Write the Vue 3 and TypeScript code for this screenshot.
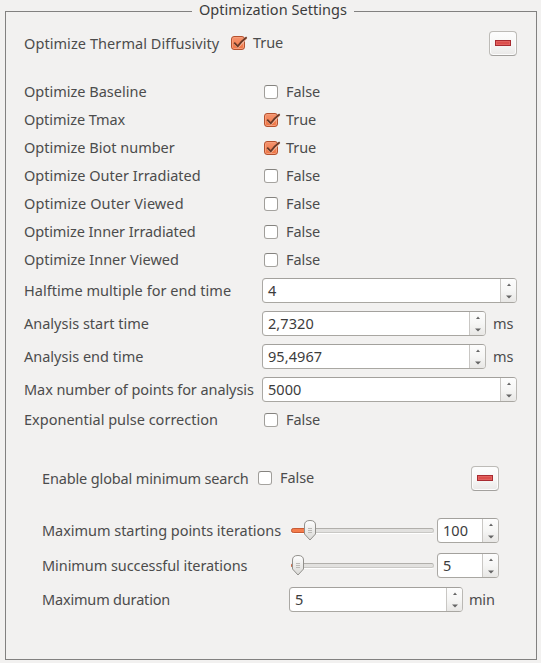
<script setup lang="ts">
import { ref } from 'vue'

interface Row {
  label: string
  kind: 'check' | 'spin'
  tracking?: number
  checked?: boolean
  value?: string
  unit?: string
}

const thermal = ref(true)
const globalSearch = ref(false)

const rows = ref<Row[]>([
  { label: 'Optimize Baseline', kind: 'check', checked: false },
  { label: 'Optimize Tmax', kind: 'check', checked: true, tracking: -0.06 },
  { label: 'Optimize Biot number', kind: 'check', checked: true },
  { label: 'Optimize Outer Irradiated', kind: 'check', checked: false },
  { label: 'Optimize Outer Viewed', kind: 'check', checked: false, tracking: 0.1 },
  { label: 'Optimize Inner Irradiated', kind: 'check', checked: false, tracking: -0.09 },
  { label: 'Optimize Inner Viewed', kind: 'check', checked: false },
  { label: 'Halftime multiple for end time', kind: 'spin', value: '4', tracking: 0.04 },
  { label: 'Analysis start time', kind: 'spin', value: '2,7320', unit: 'ms' },
  { label: 'Analysis end time', kind: 'spin', value: '95,4967', unit: 'ms' },
  { label: 'Max number of points for analysis', kind: 'spin', value: '5000', tracking: -0.08 },
  { label: 'Exponential pulse correction', kind: 'check', checked: false },
])

const sliders = ref([
  { label: 'Maximum starting points iterations', value: '100', offset: 13, tracking: -0.04 },
  { label: 'Minimum successful iterations', value: '5', offset: 1, tracking: -0.07 },
])
</script>

<template>
  <main class="page">
    <section class="frame">
      <h1 class="title"><span>Optimization Settings</span></h1>

      <header class="head main-head">
        <span class="label">Optimize Thermal Diffusivity</span>
        <button class="check" :class="{ on: thermal }" @click="thermal = !thermal">
          <svg v-if="thermal" viewBox="0 0 17 15"><path class="glow" d="M3.5 7.8 7 11.5 15.5 2.5" /><path class="tick" d="M3.2 6.7 6.8 10.3Q10 5.5 15.7 1.3" /></svg>
        </button>
        <span class="state">{{ thermal ? 'True' : 'False' }}</span>
        <button class="collapse"><i></i></button>
      </header>

      <div class="rows">
        <div v-for="row in rows" :key="row.label" class="row" :class="row.kind + '-row'">
          <span class="label" :style="{ letterSpacing: (row.tracking ?? 0) + 'px' }">{{ row.label }}</span>
          <template v-if="row.kind === 'check'">
            <button class="check" :class="{ on: row.checked }" @click="row.checked = !row.checked">
              <svg v-if="row.checked" viewBox="0 0 17 15"><path class="glow" d="M3.5 7.8 7 11.5 15.5 2.5" /><path class="tick" d="M3.2 6.7 6.8 10.3Q10 5.5 15.7 1.3" /></svg>
            </button>
            <span class="state">{{ row.checked ? 'True' : 'False' }}</span>
          </template>
          <template v-else>
            <div class="spin">
              <span class="value">{{ row.value }}</span>
              <span class="steps">
                <svg viewBox="0 0 16 23"><path d="M6 7 8 4.5l2 2.5Z" /><path d="M5 16.5h6l-3 3Z" /></svg>
              </span>
            </div>
            <span v-if="row.unit" class="unit">{{ row.unit }}</span>
          </template>
        </div>
      </div>

      <section class="sub">
        <header class="head">
          <span class="label">Enable global minimum search</span>
          <button class="check" :class="{ on: globalSearch }" @click="globalSearch = !globalSearch"></button>
          <span class="state">{{ globalSearch ? 'True' : 'False' }}</span>
          <button class="collapse"><i></i></button>
        </header>
        <div class="sub-rows">
          <div v-for="s in sliders" :key="s.label" class="row slider-row">
            <span class="label" :style="{ letterSpacing: s.tracking + 'px' }">{{ s.label }}</span>
            <div class="slider">
              <div class="track"><div class="fill" :style="{ width: s.offset + 3 + 'px' }"></div></div>
              <svg class="thumb" :style="{ left: s.offset + 'px' }" viewBox="0 0 12 21">
                <defs>
                  <linearGradient id="thumb-fill" x1="0" y1="0" x2="0" y2="1">
                    <stop offset="0" stop-color="#fff" /><stop offset="1" stop-color="#d9d8d5" />
                  </linearGradient>
                </defs>
                <path class="body" d="M.5 5Q.5.5 6 .5T11.5 5V14L6 20 .5 14Z" />
                <path class="grip" d="M4 8.5h4M4 10.5h4M4 12.5h4" />
              </svg>
            </div>
            <div class="spin small">
              <span class="value">{{ s.value }}</span>
              <span class="steps">
                <svg viewBox="0 0 16 23"><path d="M6 7 8 4.5l2 2.5Z" /><path d="M5 16.5h6l-3 3Z" /></svg>
              </span>
            </div>
          </div>
          <div class="row spin-row duration">
            <span class="label">Maximum duration</span>
            <div class="spin">
              <span class="value">5</span>
              <span class="steps">
                <svg viewBox="0 0 16 23"><path d="M6 7 8 4.5l2 2.5Z" /><path d="M5 16.5h6l-3 3Z" /></svg>
              </span>
            </div>
            <span class="unit">min</span>
          </div>
        </div>
      </section>
    </section>
  </main>
</template>

<style>
body {
  background: #f2f1f0;
}
</style>

<style scoped>
* {
  box-sizing: border-box;
}
.page {
  height: 663px;
  padding: 11px 4px 3px 5px;
  background: #f2f1f0;
  color: #4c4c4c;
  font: 14.5px/20px "Noto Sans", sans-serif;
  white-space: nowrap;
}
.frame {
  height: 649px;
  border: 1px solid #828180;
  padding: 0 19px 0 18px;
}
.title {
  display: flex;
  justify-content: center;
  height: 19px;
  margin: 0;
  font: inherit;
  color: #3c3c3c;
}
.title span {
  height: 20px;
  margin: -13px 0 0 5px;
  padding: 0 7px;
  background: #f2f1f0;
  letter-spacing: 0.05px;
}
.head {
  display: flex;
  align-items: center;
  height: 25px;
}
.head .label {
  width: 207px;
  padding-bottom: 2px;
}
.main-head .label {
  letter-spacing: 0.07px;
}
.head .check {
  margin-bottom: 1px;
}
.head .state {
  padding-bottom: 3px;
}
.rows {
  margin-top: 22px;
}
.row {
  display: flex;
  align-items: center;
}
.check-row {
  height: 28px;
}
.spin-row {
  height: 33px;
}
.slider-row {
  height: 35px;
}
.row .label {
  flex: none;
  width: 238px;
  padding-bottom: 2px;
}
.check-row .check {
  margin-left: 2px;
}
.check {
  flex: none;
  width: 14px;
  height: 14px;
  padding: 0;
  border: 1px solid #8f8d89;
  border-color: #85837f #a09e9a #a5a39f;
  border-radius: 3px;
  background: #fff;
}
.check.on {
  border-color: #b5512e;
  background: linear-gradient(#f5946f, #ef7442);
  box-shadow: inset 0 0 0 1px #f69e7a;
}
.check svg {
  display: block;
  width: 17px;
  height: 15px;
  margin: -1px 0 0 -1px;
}
.check path {
  fill: none;
}
.glow {
  stroke: #fbc3aa;
  stroke-width: 1.2;
}
.check .tick {
  stroke: #6b3a27;
  stroke-width: 1.9;
}
.state {
  margin-left: 8px;
  padding-bottom: 2px;
  letter-spacing: -0.08px;
}
.collapse {
  display: flex;
  align-items: center;
  justify-content: center;
  width: 28px;
  height: 25px;
  margin-left: auto;
  padding: 0 0 1px;
  border: 1px solid #bdbbb7;
  border-bottom-color: #a3a19e;
  border-radius: 4px;
  background: linear-gradient(#fdfdfd, #f5f5f4 60%, #e9e8e7);
  box-shadow: inset 0 0 0 1px #fcfcfc;
}
.collapse i {
  width: 16px;
  height: 6px;
  border: 1px solid #a82b31;
  background: #dc4f4d;
  box-shadow: inset 0 0 0 1px #e2625f;
}
.spin {
  display: flex;
  flex: 1;
  height: 25px;
  border: 1px solid #b0aeaa;
  border-color: #a3a19d #bab8b4 #a9a7a2 #aaa8a4;
  border-radius: 4px;
  background: #fff;
  overflow: hidden;
}
.value {
  flex: 1;
  padding-left: 5px;
  line-height: 22px;
  letter-spacing: 0.08px;
  color: #3c3c3c;
}
.steps {
  width: 16px;
  border-left: 1px solid #c9c7c4;
  background: linear-gradient(#fdfdfd, #f6f6f5 50%, #e8e7e5);
}
.steps svg {
  display: block;
  width: 16px;
  height: 23px;
}
.steps path {
  fill: #656565;
}
.unit {
  width: 31px;
  padding: 0 0 2px 7px;
}
.sub {
  margin-top: 32px;
  padding: 0 18px;
}
.sub .head .label {
  width: 216px;
  letter-spacing: -0.14px;
}
.sub-rows {
  margin-top: 22px;
}
.slider-row .label,
.duration .label {
  width: 247px;
}
.duration .label {
  letter-spacing: -0.18px;
}
.slider {
  position: relative;
  width: 148px;
  height: 21px;
  padding: 8px 3px 0 2px;
}
.track {
  height: 5px;
  border: 1px solid #c9c8c5;
  border-top-color: #b1afab;
  border-radius: 3px;
  background: #e2e1df;
  box-shadow: 0 1px 0 #fff;
}
.fill {
  height: 5px;
  margin: -1px 0 0 -1px;
  border: 1px solid #c95b35;
  border-radius: 3px 0 0 3px;
  background: #f47c4b;
}
.thumb {
  position: absolute;
  top: 0;
  width: 12px;
  height: 21px;
  margin-left: 2px;
}
.body {
  fill: url(#thumb-fill);
  stroke: #92908c;
}
.grip {
  fill: none;
  stroke: #bcbab7;
}
.small {
  flex: none;
  width: 62px;
}
.duration .unit {
  width: 36px;
  padding-left: 6px;
  letter-spacing: -0.2px;
}
</style>
